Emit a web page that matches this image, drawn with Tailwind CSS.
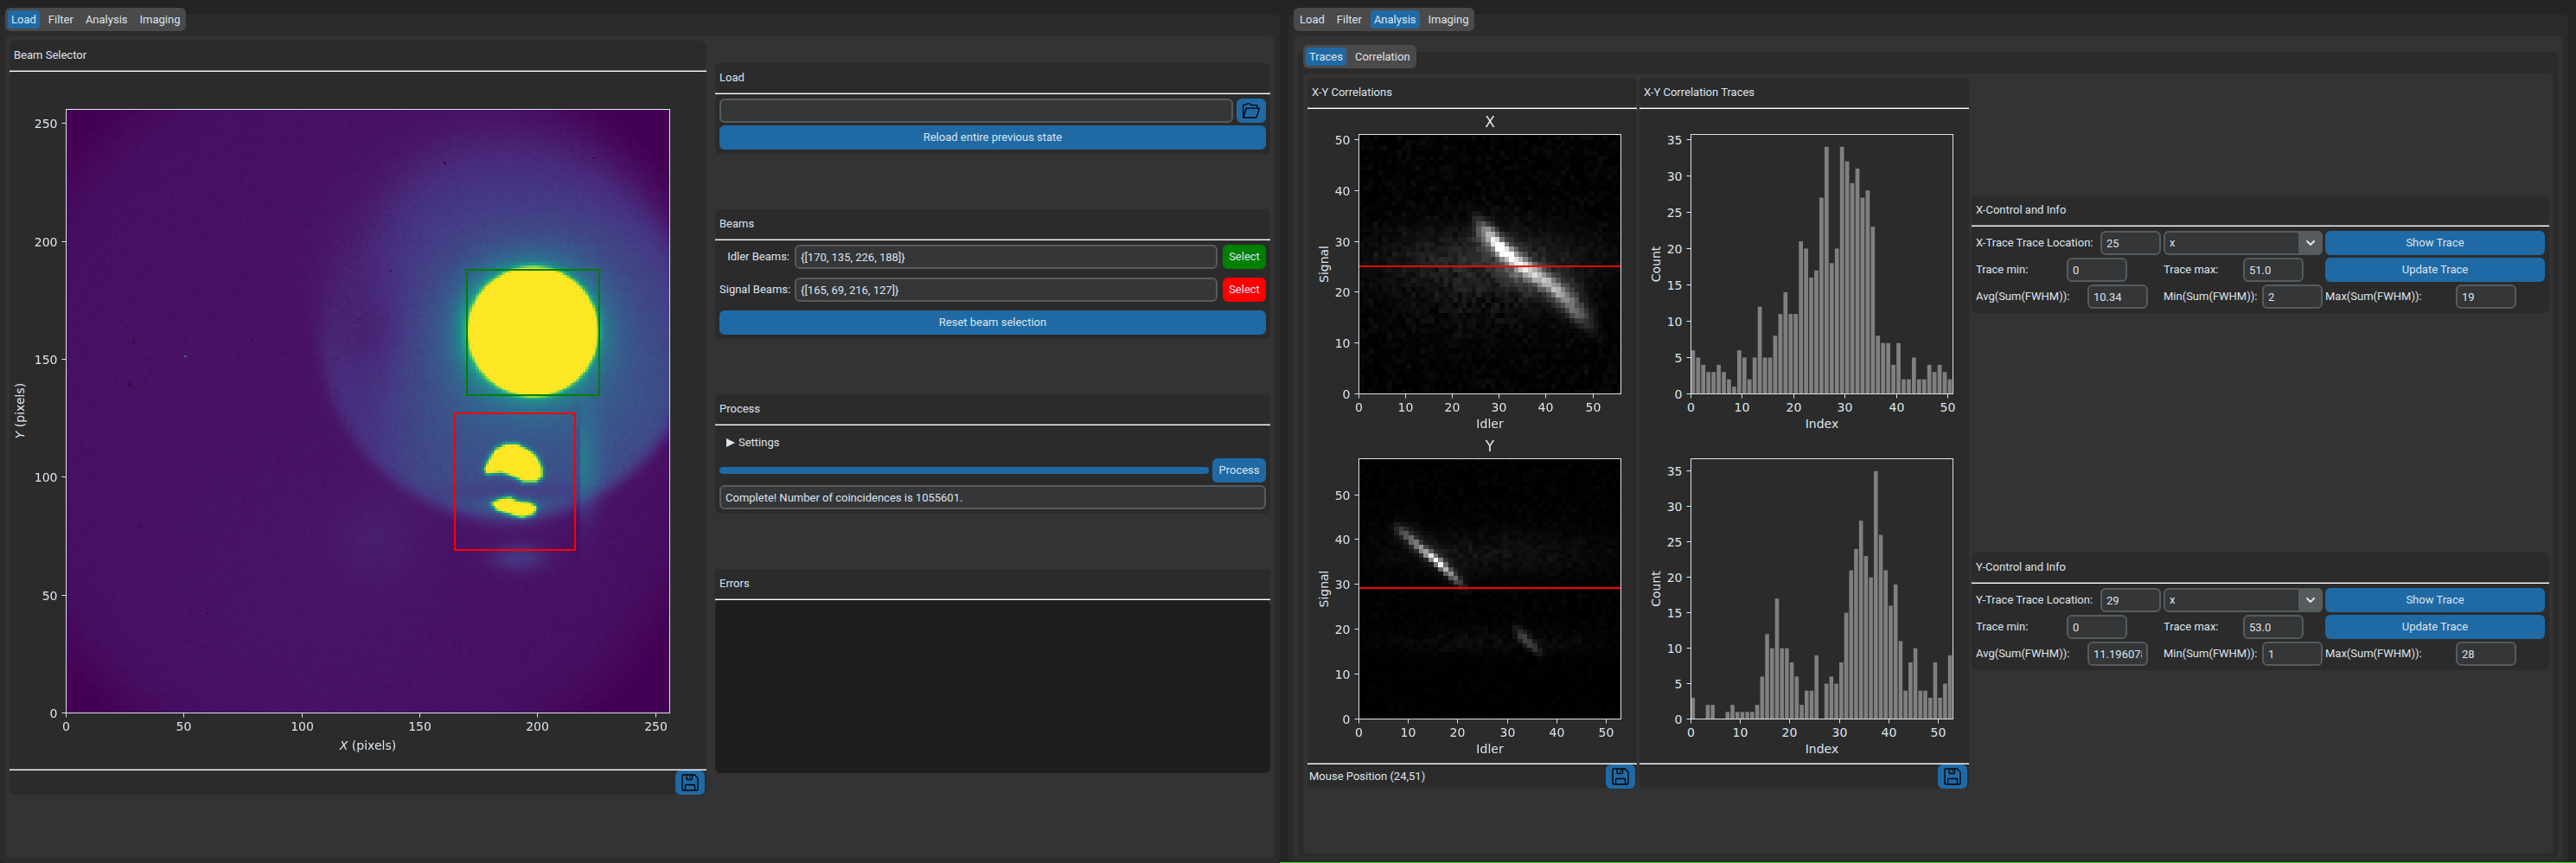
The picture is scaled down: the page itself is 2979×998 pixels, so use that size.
<!DOCTYPE html>
<html lang="en">
<head>
<meta charset="utf-8">
<title>Beam Analysis</title>
<script src="https://cdn.jsdelivr.net/npm/@tailwindcss/browser@4"></script>
</head>
<body class="bg-[#242424] text-[#dce4ee] font-['Roboto',sans-serif] text-[13px] leading-4 font-normal">
<svg class="hidden" aria-hidden="true">
  <symbol id="save" viewBox="0 0 20 20">
    <path d="M1 2.2Q1 1 2.2 1H15.2L19 5V17.800Q19 19 17.800 19H2.200Q1 19 1 17.800ZM6 1V5.500Q6 6.500 7 6.500H11.500Q12.500 6.500 12.500 5.500V1M10 2.500V4.500M4.500 19V13.500Q4.500 12.500 5.500 12.500H14.500Q15.500 12.500 15.500 13.500V19" fill="none" stroke="#000" stroke-width="1.300"/>
  </symbol>
  <symbol id="folder" viewBox="0 0 20 18">
    <path d="M.7 17V3Q.7 2 1.700 2H4L5.500.8H8.500L10 2.700H16Q17 2.700 17 3.700V6.200M.9 16.800L4.300 6.200H19.400L16.200 16.200Q16 17 15 17H.7" fill="none" stroke="#000" stroke-width="1.300" stroke-linejoin="round"/>
  </symbol>
</svg>

<div class="grid grid-cols-[1480fr_1499fr] min-h-screen">

  <!-- Load window -->
  <section class="pt-[17px] flex flex-col">
    <div class="flex-1 flex flex-col bg-[#2b2b2b] rounded-md px-1.5 pb-1.5">
      <div class="-mt-2 self-start flex gap-1.5 bg-[#4a4a4a] rounded-md p-[3px]" role="tablist">
        <button class="h-[21px] px-1 rounded bg-[#1f6aa5]" role="tab" aria-selected="true">Load</button>
        <button class="h-[21px] px-1 rounded" role="tab">Filter</button>
        <button class="h-[21px] px-1 rounded" role="tab">Analysis</button>
        <button class="h-[21px] px-1 rounded" role="tab">Imaging</button>
      </div>
      <div class="mt-1.5 flex-1 bg-[#333333] rounded-md p-[5px] grid grid-cols-[806fr_642fr] gap-2.5 items-start">
        <section>
          <h2 class="h-[34px] px-[5px] flex items-center bg-[#2b2b2b] rounded-md">Beam Selector</h2>
          <div class="h-0.5 bg-white border-t border-[#808080]"></div>
          <div class="bg-[#2b2b2b] rounded-t-md"><svg id="beam" class="block w-full h-auto" viewBox="0 0 806 806"></svg></div>
          <div class="h-0.5 bg-white border-t border-[#808080]"></div>
          <div class="bg-[#2b2b2b] rounded-b-md flex justify-end px-0.5">
            <button class="w-[34px] h-7 rounded-md bg-[#1f6aa5] flex items-center justify-center" aria-label="Save figure"><svg class="w-5 h-5"><use href="#save"/></svg></button>
          </div>
        </section>

        <div class="pt-[26px] flex flex-col gap-16">
          <section>
            <h2 class="h-[34px] px-[5px] flex items-center bg-[#2b2b2b] rounded-md">Load</h2>
            <div class="h-0.5 bg-white border-t border-[#808080]"></div>
            <div class="bg-[#2b2b2b] rounded-md p-[5px] flex flex-col gap-[3px]">
              <div class="flex gap-1">
                <input class="flex-1 min-w-0 h-7 px-[5px] rounded-md border-2 border-[#565b5e] bg-[#343638]" aria-label="File path">
                <button class="w-[34px] h-7 rounded-md bg-[#1f6aa5] flex items-center justify-center" aria-label="Open file"><svg class="w-5 h-[18px]"><use href="#folder"/></svg></button>
              </div>
              <button class="h-7 rounded-md bg-[#1f6aa5]">Reload entire previous state</button>
            </div>
          </section>

          <section>
            <h2 class="h-[34px] px-[5px] flex items-center bg-[#2b2b2b] rounded-md">Beams</h2>
            <div class="h-0.5 bg-white border-t border-[#808080]"></div>
            <div class="bg-[#2b2b2b] rounded-md p-[5px] flex flex-col gap-2.5">
              <div class="flex items-center">
                <label for="idler" class="w-[81px] text-right whitespace-nowrap">Idler Beams:</label>
                <input id="idler" class="ml-1.5 mr-1.5 flex-1 min-w-0 h-7 px-[5px] rounded-md border-2 border-[#565b5e] bg-[#343638]" value="{[170, 135, 226, 188]}">
                <button class="w-[50px] h-7 rounded-md bg-[#008000]">Select</button>
              </div>
              <div class="flex items-center">
                <label for="signal" class="w-[81px] text-right whitespace-nowrap">Signal Beams:</label>
                <input id="signal" class="ml-1.5 mr-1.5 flex-1 min-w-0 h-7 px-[5px] rounded-md border-2 border-[#565b5e] bg-[#343638]" value="{[165, 69, 216, 127]}">
                <button class="w-[50px] h-7 rounded-md bg-[#ff0000]">Select</button>
              </div>
              <button class="h-7 rounded-md bg-[#1f6aa5]">Reset beam selection</button>
            </div>
          </section>

          <section>
            <h2 class="h-[34px] px-[5px] flex items-center bg-[#2b2b2b] rounded-md">Process</h2>
            <div class="h-0.5 bg-white border-t border-[#808080]"></div>
            <div class="bg-[#2b2b2b] rounded-md p-[5px] flex flex-col gap-[3px]">
              <button class="self-start h-[30px] pl-2 flex items-center gap-1">
                <svg class="w-2.5 h-2.5" viewBox="0 0 10 10"><path d="M0 0L10 5L0 10Z" fill="#dce4ee"/></svg>Settings
              </button>
              <div class="flex items-center gap-1">
                <div class="flex-1 h-2 rounded-full bg-[#1f6aa5]" role="progressbar" aria-valuenow="100"></div>
                <button class="w-[62px] h-7 rounded-md bg-[#1f6aa5]">Process</button>
              </div>
              <input class="w-full h-7 px-[5px] rounded-md border-2 border-[#565b5e] bg-[#343638]" aria-label="Status" value="Complete! Number of coincidences is 1055601.">
            </div>
          </section>

          <section>
            <h2 class="h-[34px] px-[5px] flex items-center bg-[#2b2b2b]">Errors</h2>
            <div class="h-0.5 bg-white border-t border-[#808080]"></div>
            <textarea class="block w-full h-[200px] resize-none rounded-md bg-[#1d1e1e]" aria-label="Errors"></textarea>
          </section>
        </div>
      </div>
    </div>
  </section>

  <!-- Analysis window -->
  <section class="pt-[17px] pl-2.5 pr-[9px] flex flex-col border-b border-[#39d81f]">
    <div class="flex-1 flex flex-col bg-[#2b2b2b] rounded-md px-1.5 pb-1">
      <div class="-mt-2 self-start flex gap-1.5 bg-[#4a4a4a] rounded-md p-[3px]" role="tablist">
        <button class="h-[21px] px-1 rounded" role="tab">Load</button>
        <button class="h-[21px] px-1 rounded" role="tab">Filter</button>
        <button class="h-[21px] px-1 rounded bg-[#1f6aa5]" role="tab" aria-selected="true">Analysis</button>
        <button class="h-[21px] px-1 rounded" role="tab">Imaging</button>
      </div>
      <div class="mt-1.5 flex-1 flex flex-col bg-[#333333] rounded-md pt-[18px] px-[5px] pb-px">
        <div class="flex-1 flex flex-col bg-[#2b2b2b] rounded-md px-1.5 pb-[5px]">
          <div class="-mt-2 self-start flex gap-1.5 bg-[#4a4a4a] rounded-md p-[3px]" role="tablist">
            <button class="h-[21px] px-1 rounded bg-[#1f6aa5]" role="tab" aria-selected="true">Traces</button>
            <button class="h-[21px] px-1 rounded" role="tab">Correlation</button>
          </div>
          <div class="mt-1.5 flex-1 bg-[#333333] rounded-md p-[5px] grid grid-cols-[381fr_381fr_668fr] gap-[3px] items-start">
            <section>
              <h2 class="h-[34px] px-[5px] flex items-center bg-[#2b2b2b] rounded-md">X-Y Correlations</h2>
              <div class="h-0.5 bg-white border-t border-[#808080]"></div>
              <div class="bg-[#2b2b2b] rounded-t-md"><svg id="maps" class="block w-full h-auto" viewBox="0 0 381 756"></svg></div>
              <div class="h-0.5 bg-white border-t border-[#808080]"></div>
              <div class="bg-[#2b2b2b] rounded-b-md flex items-center justify-between px-0.5">
                <span>Mouse Position (24,51)</span>
                <button class="w-[34px] h-7 rounded-md bg-[#1f6aa5] flex items-center justify-center" aria-label="Save figure"><svg class="w-5 h-5"><use href="#save"/></svg></button>
              </div>
            </section>
            <section>
              <h2 class="h-[34px] px-[5px] flex items-center bg-[#2b2b2b] rounded-md">X-Y Correlation Traces</h2>
              <div class="h-0.5 bg-white border-t border-[#808080]"></div>
              <div class="bg-[#2b2b2b] rounded-t-md"><svg id="traces" class="block w-full h-auto" viewBox="0 0 381 756"></svg></div>
              <div class="h-0.5 bg-white border-t border-[#808080]"></div>
              <div class="bg-[#2b2b2b] rounded-b-md flex justify-end px-0.5">
                <button class="w-[34px] h-7 rounded-md bg-[#1f6aa5] flex items-center justify-center" aria-label="Save figure"><svg class="w-5 h-5"><use href="#save"/></svg></button>
              </div>
            </section>

            <div class="pt-[136px] flex flex-col gap-[277px]">
              <section>
                <h2 class="h-[34px] px-[5px] flex items-center bg-[#2b2b2b] rounded-md">X-Control and Info</h2>
                <div class="h-0.5 bg-white border-t border-[#808080]"></div>
                <div class="bg-[#2b2b2b] rounded-md p-[5px] grid grid-cols-[214fr_184fr_254fr] gap-[3px]">
                  <div class="flex items-center justify-between">
                    <label for="xloc">X-Trace Trace Location:</label>
                    <input id="xloc" class="w-[70px] h-7 px-[5px] rounded-md border-2 border-[#565b5e] bg-[#343638]" value="25">
                  </div>
                  <div class="relative">
                    <select class="appearance-none w-full h-7 px-[5px] rounded-md border-2 border-[#565b5e] bg-[#343638]" aria-label="X trace axis"><option>x</option></select>
                    <span class="absolute right-0 top-0 w-7 h-7 rounded-r-md bg-[#565b5e] flex items-center justify-center pointer-events-none"><svg class="w-2.5 h-1.5" viewBox="0 0 10 6"><path d="M1 1L5 5L9 1" fill="none" stroke="#dce4ee" stroke-width="2" stroke-linecap="round" stroke-linejoin="round"/></svg></span>
                  </div>
                  <button class="h-7 rounded-md bg-[#1f6aa5]">Show Trace</button>
                  <div class="flex items-center">
                    <label for="xmin" class="w-[105px]">Trace min:</label>
                    <input id="xmin" class="w-[70px] h-7 px-[5px] rounded-md border-2 border-[#565b5e] bg-[#343638]" value="0">
                  </div>
                  <div class="flex items-center">
                    <label for="xmax" class="w-[92px]">Trace max:</label>
                    <input id="xmax" class="w-[70px] h-7 px-[5px] rounded-md border-2 border-[#565b5e] bg-[#343638]" value="51.0">
                  </div>
                  <button class="h-7 rounded-md bg-[#1f6aa5]">Update Trace</button>
                  <div class="flex items-center">
                    <label for="xavg" class="w-[129px]">Avg(Sum(FWHM)):</label>
                    <input id="xavg" class="w-[70px] h-7 px-[5px] rounded-md border-2 border-[#565b5e] bg-[#343638]" value="10.34">
                  </div>
                  <div class="flex items-center justify-between">
                    <label for="xlow">Min(Sum(FWHM)):</label>
                    <input id="xlow" class="w-[70px] h-7 px-[5px] rounded-md border-2 border-[#565b5e] bg-[#343638]" value="2">
                  </div>
                  <div class="flex items-center">
                    <label for="xhigh" class="w-[151px]">Max(Sum(FWHM)):</label>
                    <input id="xhigh" class="w-[70px] h-7 px-[5px] rounded-md border-2 border-[#565b5e] bg-[#343638]" value="19">
                  </div>
                </div>
              </section>
              <section>
                <h2 class="h-[34px] px-[5px] flex items-center bg-[#2b2b2b] rounded-md">Y-Control and Info</h2>
                <div class="h-0.5 bg-white border-t border-[#808080]"></div>
                <div class="bg-[#2b2b2b] rounded-md p-[5px] grid grid-cols-[214fr_184fr_254fr] gap-[3px]">
                  <div class="flex items-center justify-between">
                    <label for="yloc">Y-Trace Trace Location:</label>
                    <input id="yloc" class="w-[70px] h-7 px-[5px] rounded-md border-2 border-[#565b5e] bg-[#343638]" value="29">
                  </div>
                  <div class="relative">
                    <select class="appearance-none w-full h-7 px-[5px] rounded-md border-2 border-[#565b5e] bg-[#343638]" aria-label="Y trace axis"><option>x</option></select>
                    <span class="absolute right-0 top-0 w-7 h-7 rounded-r-md bg-[#565b5e] flex items-center justify-center pointer-events-none"><svg class="w-2.5 h-1.5" viewBox="0 0 10 6"><path d="M1 1L5 5L9 1" fill="none" stroke="#dce4ee" stroke-width="2" stroke-linecap="round" stroke-linejoin="round"/></svg></span>
                  </div>
                  <button class="h-7 rounded-md bg-[#1f6aa5]">Show Trace</button>
                  <div class="flex items-center">
                    <label for="ymin" class="w-[105px]">Trace min:</label>
                    <input id="ymin" class="w-[70px] h-7 px-[5px] rounded-md border-2 border-[#565b5e] bg-[#343638]" value="0">
                  </div>
                  <div class="flex items-center">
                    <label for="ymax" class="w-[92px]">Trace max:</label>
                    <input id="ymax" class="w-[70px] h-7 px-[5px] rounded-md border-2 border-[#565b5e] bg-[#343638]" value="53.0">
                  </div>
                  <button class="h-7 rounded-md bg-[#1f6aa5]">Update Trace</button>
                  <div class="flex items-center">
                    <label for="yavg" class="w-[129px]">Avg(Sum(FWHM)):</label>
                    <input id="yavg" class="w-[70px] h-7 px-[5px] rounded-md border-2 border-[#565b5e] bg-[#343638]" value="11.196078">
                  </div>
                  <div class="flex items-center justify-between">
                    <label for="ylow">Min(Sum(FWHM)):</label>
                    <input id="ylow" class="w-[70px] h-7 px-[5px] rounded-md border-2 border-[#565b5e] bg-[#343638]" value="1">
                  </div>
                  <div class="flex items-center">
                    <label for="yhigh" class="w-[151px]">Max(Sum(FWHM)):</label>
                    <input id="yhigh" class="w-[70px] h-7 px-[5px] rounded-md border-2 border-[#565b5e] bg-[#343638]" value="28">
                  </div>
                </div>
              </section>
            </div>
          </div>
        </div>
      </div>
    </div>
  </section>
</div>

<script>
const NS = 'http://www.w3.org/2000/svg';
const INK = '#dce4ee';
function add(parent, tag, attrs, text) {
  const e = document.createElementNS(NS, tag);
  for (const k in attrs) e.setAttribute(k, attrs[k]);
  if (text != null) e.textContent = text;
  parent.appendChild(e);
  return e;
}
function label(svg, x, y, text, anchor, cls) {
  return add(svg, 'text', {x, y, 'text-anchor': anchor, fill: INK, class: cls || "font-['DejaVu_Sans'] font-normal text-[14px]"}, text);
}
// Frame, ticks and axis titles around a plot box; a = {x, y, w, h, xm, ym}.
function axes(svg, a) {
  add(svg, 'rect', {x: a.x, y: a.y, width: a.w, height: a.h, fill: 'none', stroke: INK, 'stroke-width': 1});
  for (const t of a.xt) {
    const x = Math.round(a.x + t * a.w / a.xm - .5) + .5;
    add(svg, 'path', {d: `M${x} ${a.y + a.h}v5`, stroke: INK});
    label(svg, x, a.y + a.h + 20, t, 'middle');
  }
  for (const t of a.yt) {
    const y = Math.round(a.y + a.h - t * a.h / a.ym - .5) + .5;
    add(svg, 'path', {d: `M${a.x} ${y}h-5`, stroke: INK});
    label(svg, a.x - 10, y + 5, t, 'end');
  }
}
function vertical(svg, x, y, text) {
  const t = label(svg, 0, 0, text, 'middle');
  t.setAttribute('transform', `translate(${x} ${y}) rotate(-90)`);
  return t;
}
let seed = 7;
function rnd() { seed = (seed * 1664525 + 1013904223) >>> 0; return seed / 4294967296; }
function gauss() { return rnd() + rnd() + rnd() + rnd() - 2; }

function heat(svg, a, cols, rows, value, color) {
  const fo = add(svg, 'foreignObject', {x: a.x, y: a.y, width: a.w, height: a.h});
  const c = document.createElement('canvas');
  c.width = cols; c.height = rows;
  c.className = 'block w-full h-full [image-rendering:pixelated]';
  fo.appendChild(c);
  const g = c.getContext('2d'), im = g.createImageData(cols, rows);
  for (let r = 0; r < rows; r++) for (let q = 0; q < cols; q++) {
    const rgb = color(Math.max(0, Math.min(1, value(q + .5, rows - r - .5))));
    const i = (r * cols + q) * 4;
    im.data[i] = rgb[0]; im.data[i + 1] = rgb[1]; im.data[i + 2] = rgb[2]; im.data[i + 3] = 255;
  }
  g.putImageData(im, 0, 0);
}
const VIR = [[68,1,84],[72,20,103],[72,40,120],[67,62,133],[56,89,140],[49,104,142],[38,130,142],[31,158,137],[53,183,121],[109,205,89],[180,222,44],[253,231,37]];
const VPOS = [0,.06,.12,.2,.29,.35,.45,.55,.65,.77,.88,1];
function viridis(v) {
  let i = 1;
  while (i < 11 && v > VPOS[i]) i++;
  const f = (v - VPOS[i - 1]) / (VPOS[i] - VPOS[i - 1]);
  return [0, 1, 2].map(k => VIR[i - 1][k] + f * (VIR[i][k] - VIR[i - 1][k]));
}
const gray = v => [v * 255, v * 255, v * 255];
function segDist(x, y, x1, y1, x2, y2) {
  const dx = x2 - x1, dy = y2 - y1;
  const t = Math.max(0, Math.min(1, ((x - x1) * dx + (y - y1) * dy) / (dx * dx + dy * dy)));
  return [Math.hypot(x - x1 - t * dx, y - y1 - t * dy), t];
}
// Signed distance to a polygon, positive outside.
function polyDist(x, y, p) {
  let d = 1e9, inside = false;
  for (let i = 0, j = p.length - 1; i < p.length; j = i++) {
    d = Math.min(d, segDist(x, y, p[j][0], p[j][1], p[i][0], p[i][1])[0]);
    if ((p[i][1] > y) !== (p[j][1] > y) && x < (p[j][0] - p[i][0]) * (y - p[i][1]) / (p[j][1] - p[i][1]) + p[i][0]) inside = !inside;
  }
  return inside ? -d : d;
}
const sig = t => 1 / (1 + Math.exp(-t));
const bump = (x, y, cx, cy, sx, sy) => Math.exp(-((x - cx) ** 2 / sx / sx + (y - cy) ** 2 / sy / sy) / 2);
const UPPER = [[178,103.6],[180,108],[182.4,111.6],[186.3,113.4],[191,113.4],[196,111],[199.3,108],[201,103.7],[201,100.6],[199,99],[194,99],[190,101],[185,103],[178.5,102.5]];
const LOWER = [[181,89],[184,90.300],[188,91],[191,89.300],[196,88.800],[198.500,87.200],[197.500,85],[193,83.800],[187.400,85.500],[183,87]];
const SPOTS = [[137,187],[160,233],[28,157],[78,158],[26,139],[30,79],[59,42],[223,235]];

function beam(x, y) {
  let v = .047 + gauss() * .007;
  v -= .075 * sig((Math.hypot(x - 122, (y - 128) * .96) - 156) / 8);
  v += .01 * bump(x, y, 110, 60, 50, 50);
  const r = Math.hypot(x - 187, y - 163);
  const soft = 1.6 + 5 * sig((y - 200) / 12) + 3 * sig((y - 170) / 6) * sig((130 - x) / 6);
  const disc = sig((80 - r) / soft);
  const b = Math.hypot(x - 198, y - 162);
  const high = sig((212 - y) / 12);
  v += disc * (.045 + .045 * sig((x - 138) / 7) + .05 * sig((x - 142) / 8) * high + .045 * sig((150 - y) / 12));
  v -= disc * .035 * bump(x, y, 130, 160, 8, 12);
  v += disc * .13 * Math.exp(-Math.max(0, b - 28) / 20);
  if (b > 26) v += .28 * Math.exp(-Math.max(0, b - 27) / 5) * (.75 + .7 * sig((178 - x) / 5));
  v += .75 * sig((27.3 - b) / .6);
  if (x > 218) v += .15 * bump(x, y, 219, 105, 5, 15);
  v += .12 * bump(x, y, 192, 66, 8, 4) + .03 * bump(x, y, 132, 75, 13, 14) + .07 * bump(x, y, 190, 87, 13, 6);
  v -= disc * .06 * bump(x, y, 191, 94, 24, 3);
  for (const p of [UPPER, LOWER]) {
    const d = polyDist(x, y, p);
    if (d < 9) v += 1.1 * sig((.5 - d) / .55);
  }
  for (const s of SPOTS) if (Math.abs(x - .5 - s[0]) < .6 && Math.abs(y - .5 - s[1]) < .9) v -= .1;
  if (Math.abs(x - 50.5) < .6 && Math.abs(y - 151.5) < .6) v = .4;
  return v + disc * gauss() * .012;
}
{
  const svg = document.getElementById('beam');
  const a = {x: 65.5, y: 43.5, w: 698, h: 698, xm: 256, ym: 256, xt: [0,50,100,150,200,250], yt: [0,50,100,150,200,250]};
  heat(svg, a, 256, 256, beam, viridis);
  const u = a.w / 256;
  const box = (x0, y0, x1, y1, c) => add(svg, 'rect', {x: Math.round(a.x + x0 * u), y: Math.round(a.y + a.h - y1 * u), width: Math.round((x1 - x0) * u), height: Math.round((y1 - y0) * u), fill: 'none', stroke: c, 'stroke-width': 2});
  box(170, 135, 226, 188, '#008000');
  box(165, 69, 216, 127, '#ff0000');
  axes(svg, a);
  const italic = t => { t.innerHTML = '<tspan font-style="italic">' + t.textContent[0] + '</tspan>' + t.textContent.slice(1); };
  italic(label(svg, 414.5, 784, 'X (pixels)', 'middle'));
  italic(vertical(svg, 17, 392, 'Y (pixels)'));
}

function ridge(x, y, pts) {
  let v = 0;
  for (let i = 1; i < pts.length; i++) {
    const [p, q] = [pts[i - 1], pts[i]];
    const [d, t] = segDist(x, y, p[0], p[1], q[0], q[1]);
    const s = p[3] + t * (q[3] - p[3]);
    v = Math.max(v, (p[2] + t * (q[2] - p[2])) * Math.exp(-d * d / 2 / s / s));
  }
  return v;
}
const RX = [[24.500,35.500,.06,.8],[26.500,32.500,.28,1],[28.500,30.500,.65,.9],[30.500,28.500,.88,.9],[33,26.500,.75,1],[37,24,.55,1],[41,21.500,.42,1],[45,17.500,.32,1.1],[48.500,14,.14,1.1],[51,11,.03,1]];
const mapX = (x, y) => ridge(x, y, RX) * (.85 + rnd() * .3)
  + .22 * ridge(x, y, [[27,31,1,1.800],[34,24,1,2.200],[44,20,1,2.200],[48,16,.5,1.600]]) * (.7 + rnd() * .6)
  + .12 * bump(x, y, 27, 27, 15, 4) * (.6 + rnd() * .8) + .06 * bump(x, y, 26, 20, 14, 6) * (rnd() * 1.5)
  + rnd() * rnd() * .055;
const RY = [[7.500,43,.08,.6],[9.500,41,.28,.55],[12.500,38,.5,.6],[15.500,35.500,.9,.55],[17.500,33.500,.65,.55],[20,30.500,.28,.55],[21.800,28.800,.07,.5]];
const mapY = (x, y) => ridge(x, y, RY) * (.9 + rnd() * .2) + .1 * ridge(x, y, [[9,42,1,1.500],[15,37,1,1.500],[20,32,.6,1.300]])
  + ridge(x, y, [[31.800,20.500,.08,.6],[33,18.500,.24,.7],[35,16.500,.24,.7],[36.500,14.500,.08,.6]])
  + .06 * bump(x, y, 27, 37, 16, 3.500) * (.4 + rnd()) + .04 * bump(x, y, 27, 17.500, 18, 2) * (rnd() * 1.500)
  + rnd() * rnd() * (y > 20 ? .03 : .016);
{
  const svg = document.getElementById('maps');
  const a = {x: 59.5, y: 29.5, w: 303, h: 300, xm: 56, ym: 51, xt: [0,10,20,30,40,50], yt: [0,10,20,30,40,50]};
  const b = {x: 59.5, y: 404.5, w: 303, h: 301, xm: 53, ym: 58, xt: [0,10,20,30,40,50], yt: [0,10,20,30,40,50]};
  heat(svg, a, 56, 51, mapX, gray);
  heat(svg, b, 53, 58, mapY, gray);
  add(svg, 'path', {d: 'M60 182H362M60 554H362', stroke: '#ff0000', 'stroke-width': 2});
  for (const [p, name] of [[a, 'X'], [b, 'Y']]) {
    axes(svg, p);
    label(svg, 211, p.y - 9, name, 'middle', "font-['DejaVu_Sans'] font-normal text-[17px]");
    label(svg, 211, p.y + p.h + 39, 'Idler', 'middle');
    vertical(svg, 24, p.y + p.h / 2, 'Signal');
  }
}
const BX = [6,5,4,3,3,4,3,2,1,6,5,2,5,12,5,5,8,11,14,11,11,21,20,16,17,27,34,18,20,34,32,29,31,27,28,23,8,7,7,4,7,2,2,5,2,2,4,3,4,3,2];
const BY = [3,0,0,2,2,0,0,1,2,1,1,1,1,2,6,12,10,17,10,10,8,6,2,4,4,9,0,5,6,5,8,15,21,24,28,23,20,35,26,21,16,19,11,4,8,10,4,4,3,8,3,5,9];
{
  const svg = document.getElementById('traces');
  const yt = [0,5,10,15,20,25,30,35], xt = [0,10,20,30,40,50];
  for (const [p, data] of [
    [{x: 59.5, y: 29.5, w: 303, h: 300, xm: 51, ym: 35.7, xt, yt}, BX],
    [{x: 59.5, y: 404.5, w: 303, h: 301, xm: 53, ym: 36.75, xt, yt}, BY]]) {
    const u = p.w / p.xm;
    data.forEach((n, i) => add(svg, 'rect', {x: p.x + i * u, y: p.y + p.h - n * p.h / p.ym, width: u * .8, height: n * p.h / p.ym, fill: '#808080'}));
    axes(svg, p);
    label(svg, 211, p.y + p.h + 39, 'Index', 'middle');
    vertical(svg, 24, p.y + p.h / 2, 'Count');
  }
}
</script>
</body>
</html>
